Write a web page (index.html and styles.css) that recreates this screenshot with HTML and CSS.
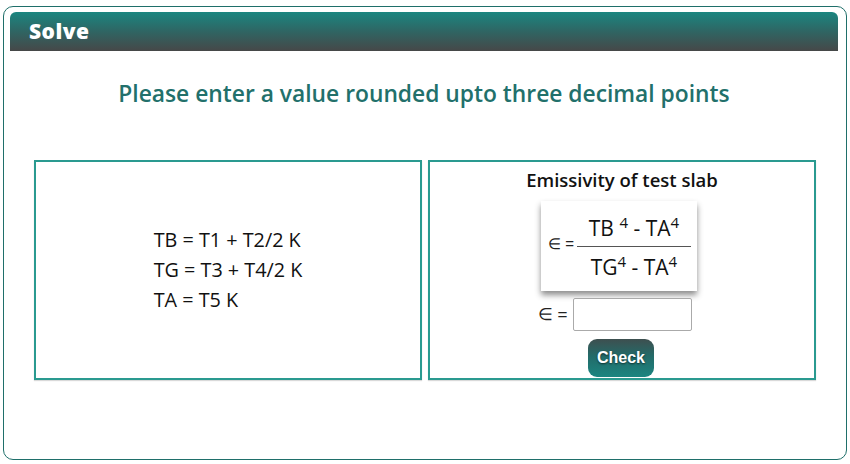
FILE: index.html
```html
<!DOCTYPE html>
<html>
<head>
<meta charset="utf-8">
<link rel="stylesheet" href="styles.css">
</head>
<body>
<div class="card">
  <div class="card-header">Solve</div>
  <h2 class="prompt">Please enter a value rounded upto three decimal points</h2>
  <div class="panels">
    <div class="panel panel-left">
      <div class="defs">
        <div>TB = T1 + T2/2 K</div>
        <div>TG = T3 + T4/2 K</div>
        <div>TA = T5 K</div>
      </div>
    </div>
    <div class="panel panel-right">
      <div class="panel-title">Emissivity of test slab</div>
      <div class="formula">
        <span class="eps">&#8712; =</span>
        <span class="frac">
          <span class="num">TB <sup>4</sup> - TA<sup>4</sup></span>
          <span class="den">TG<sup>4</sup> - TA<sup>4</sup></span>
        </span>
      </div>
      <div class="answer-row">
        <span class="eps-label">&#8712; =</span>
        <input class="answer" type="text">
      </div>
      <button class="check">Check</button>
    </div>
  </div>
</div>
</body>
</html>
```

FILE: styles.css
```css
html, body {
  margin: 0;
  padding: 0;
  background: #ffffff;
}
body {
  font-family: "Open Sans", Lato, sans-serif;
}
.card {
  box-sizing: border-box;
  margin: 6px 3px 4px 3px;
  height: 454px;
  border: 1px solid #1f6f6a;
  border-radius: 10px;
  padding: 5px 8px 0 6px;
}
.card-header {
  height: 39px;
  box-sizing: border-box;
  border-radius: 6px 6px 0 0;
  background: linear-gradient(to bottom, #1b8680 0%, #2f6563 50%, #464848 100%);
  color: #fff;
  font-weight: 800;
  font-size: 21px;
  letter-spacing: 0.5px;
  line-height: 39px;
  padding-left: 19px;
}
.prompt {
  margin: 29px 0 0 0;
  text-align: center;
  font-size: 22.8px;
  font-weight: 600;
  color: #22706b;
  line-height: 28px;
}
.panels {
  display: flex;
  justify-content: center;
  gap: 6px;
  margin-top: 52px;
  padding-left: 2px;
}
.panel {
  box-sizing: border-box;
  width: 388px;
  height: 220px;
  border: 2px solid #2a9a90;
  box-shadow: 0 1px 1px rgba(0,0,0,0.15);
}
.panel-left {
  display: flex;
  align-items: center;
  justify-content: center;
}
.defs {
  font-size: 19.8px;
  color: #111;
  line-height: 30px;
}
.panel-right {
  display: flex;
  flex-direction: column;
  align-items: center;
}
.panel-title {
  margin-top: 6px;
  font-size: 18.5px;
  font-weight: 600;
  color: #111;
  line-height: 24px;
}
.formula {
  margin-top: 9px;
  margin-right: 6px;
  width: 156px;
  height: 90px;
  box-sizing: border-box;
  background: #fff;
  box-shadow: 0 4px 6px rgba(0,0,0,0.45);
  display: flex;
  align-items: center;
  padding: 0 0 4px 7px;
}
.eps {
  font-family: "Liberation Sans", Arial, sans-serif;
  font-size: 15px;
  color: #222;
  margin-right: 3px;
  white-space: nowrap;
}
.frac {
  align-self: flex-start;
  margin-top: 14px;
  display: flex;
  flex-direction: column;
  align-items: center;
  font-size: 21px;
  color: #111;
}
.num {
  padding: 0 0 5px;
  border-bottom: 1px solid #555;
  width: 114px;
  text-align: center;
  line-height: 26px;
}
.den {
  padding-top: 7px;
  line-height: 26px;
}
sup {
  font-size: 15px;
  vertical-align: 8px;
  line-height: 0;
}
.answer-row {
  margin-top: 7px;
  margin-right: 14px;
  display: flex;
  align-items: center;
  gap: 6px;
}
.eps-label {
  font-family: "Liberation Sans", Arial, sans-serif;
  font-size: 17px;
  color: #222;
}
.answer {
  box-sizing: border-box;
  width: 119px;
  height: 33px;
  border: 1px solid #aaa;
  border-radius: 2px;
  margin: 0;
}
.check {
  margin-top: 8px;
  margin-right: 2px;
  width: 66px;
  height: 38px;
  border: none;
  border-radius: 9px;
  background: linear-gradient(to bottom, #3e4f4f 0%, #236b69 45%, #1b8580 100%);
  color: #fff;
  font-family: "Liberation Sans", Arial, sans-serif;
  font-weight: bold;
  font-size: 16px;
  text-shadow: 0 1px 2px rgba(0,0,0,0.6);
  padding: 0;
}
```
